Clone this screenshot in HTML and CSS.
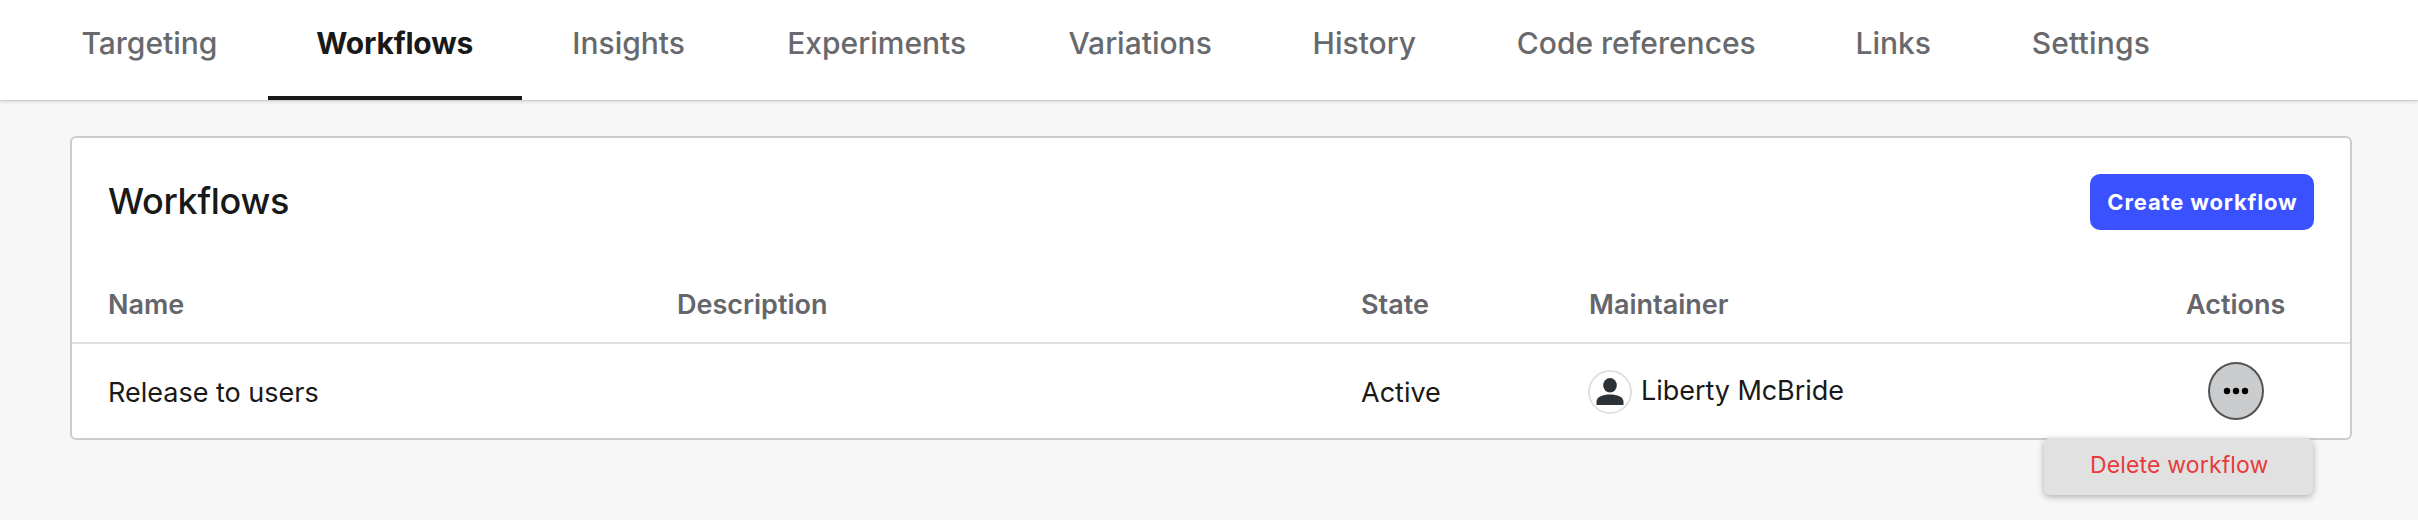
FILE: index.html
```html
<!DOCTYPE html>
<html lang="en">
<head>
<meta charset="utf-8">
<title>Workflows</title>
<link rel="stylesheet" href="styles.css">
</head>
<body>
<nav class="tabs">
  <a class="tab">Targeting</a>
  <a class="tab tab-active">Workflows</a>
  <a class="tab tab-wide">Insights</a>
  <a class="tab tab-wide">Experiments</a>
  <a class="tab">Variations</a>
  <a class="tab">History</a>
  <a class="tab tab-snug">Code references</a>
  <a class="tab">Links</a>
  <a class="tab tab-loose">Settings</a>
</nav>
<main class="card">
  <header class="card-header">
    <h1 class="title">Workflows</h1>
    <button class="create">Create workflow</button>
  </header>
  <div class="row head">
    <span>Name</span><span>Description</span><span>State</span><span>Maintainer</span><span class="actions-label">Actions</span>
  </div>
  <div class="row body">
    <span>Release to users</span>
    <span></span>
    <span>Active</span>
    <span class="maintainer">
      <svg class="avatar" viewBox="0 0 44 44"><circle cx="22" cy="22" r="21" fill="#fff" stroke="#e1e1e1" stroke-width="2"/><ellipse cx="22" cy="15.3" rx="6.8" ry="7.2" fill="#2c3338"/><path d="M8.500 35v-3.500c0-4.500 6.500-7 13.500-7s13.500 2.500 13.500 7v3.500z" fill="#2c3338"/></svg>
      <span class="person">Liberty McBride</span>
    </span>
    <span class="actions">
      <button class="more" aria-label="Actions"><svg width="26" height="8" viewBox="0 0 26 8"><circle cx="4" cy="4" r="3.200"/><circle cx="13" cy="4" r="3.200"/><circle cx="22" cy="4" r="3.200"/></svg></button>
    </span>
  </div>
  <div class="menu">Delete workflow</div>
</main>
</body>
</html>
```
FILE: styles.css
```css
* { box-sizing: border-box; }
body {
  margin: 0;
  height: 520px;
  overflow: hidden;
  background: #f7f7f7;
  color: #191919;
  font-family: Inter, "Liberation Sans", sans-serif;
  font-size: 27px;
}
button { font-family: inherit; padding: 0; }
.tabs {
  display: flex;
  height: 100px;
  padding-left: 31px;
  background: #fff;
  box-shadow: 0 1px 1px rgba(0, 0, 0, .1), 0 2px 4px rgba(0, 0, 0, .1);
}
.tab {
  padding: 25px 50.4px 0;
  font-size: 30px;
  line-height: 36px;
  font-weight: 500;
  color: #68696d;
  white-space: nowrap;
}
.tab-wide { padding-right: 51.9px; }
.tab-snug { padding-right: 49.4px; }
.tab-loose { letter-spacing: .15px; }
.tab-active {
  width: 254px;
  padding: 25px 0 0 48.5px;
  font-weight: 700;
  letter-spacing: -.2px;
  color: #191919;
  border-bottom: 4px solid #191919;
}
.card {
  position: relative;
  width: 2282px;
  height: 304px;
  margin: 36px 0 0 70px;
  background: #fff;
  border: 2px solid #ccc;
  border-radius: 6px;
}
.card-header {
  display: flex;
  justify-content: space-between;
  height: 132px;
  padding: 36px 36px 0;
}
.title {
  margin: 5px 0 0;
  font-size: 36px;
  line-height: 44px;
  font-weight: 500;
  letter-spacing: -.3px;
}
.create {
  width: 224px;
  height: 56px;
  padding-left: 1px;
  border: 0;
  border-radius: 10px;
  background: #3951ff;
  color: #fff;
  font-size: 22px;
  font-weight: 700;
  letter-spacing: .85px;
  white-space: nowrap;
}
.row {
  display: grid;
  grid-template-columns: 569px 684px 228px 591px 1fr;
  padding-left: 36px;
  line-height: 34px;
  white-space: nowrap;
}
.head {
  height: 74px;
  padding-top: 18px;
  border-bottom: 2px solid #e1e1e1;
  color: #65666b;
  font-weight: 600;
}
.actions-label { padding-left: 6px; }
.body {
  height: 94px;
  padding-top: 32px;
}
.maintainer {
  display: flex;
  gap: 9px;
  margin: -6px 0 0 -1px;
}
.avatar { width: 44px; height: 44px; }
.person { padding-top: 4px; letter-spacing: -.05px; }
.actions {
  margin-top: -14px;
  padding-left: 28px;
}
.more {
  display: flex;
  align-items: center;
  justify-content: center;
  width: 56px;
  height: 58px;
  border: 2px solid #515254;
  border-radius: 50%;
  background: #cbccce;
}
.menu {
  position: absolute;
  left: 1972px;
  top: 300px;
  width: 269px;
  height: 57px;
  padding: 12px 0 0 46px;
  border-radius: 6px;
  background: #e1e1e1;
  box-shadow: 0 2px 7px rgba(0, 0, 0, .3);
  color: #e83b3b;
  font-size: 23px;
  line-height: 30px;
  letter-spacing: .15px;
  white-space: nowrap;
}
```
